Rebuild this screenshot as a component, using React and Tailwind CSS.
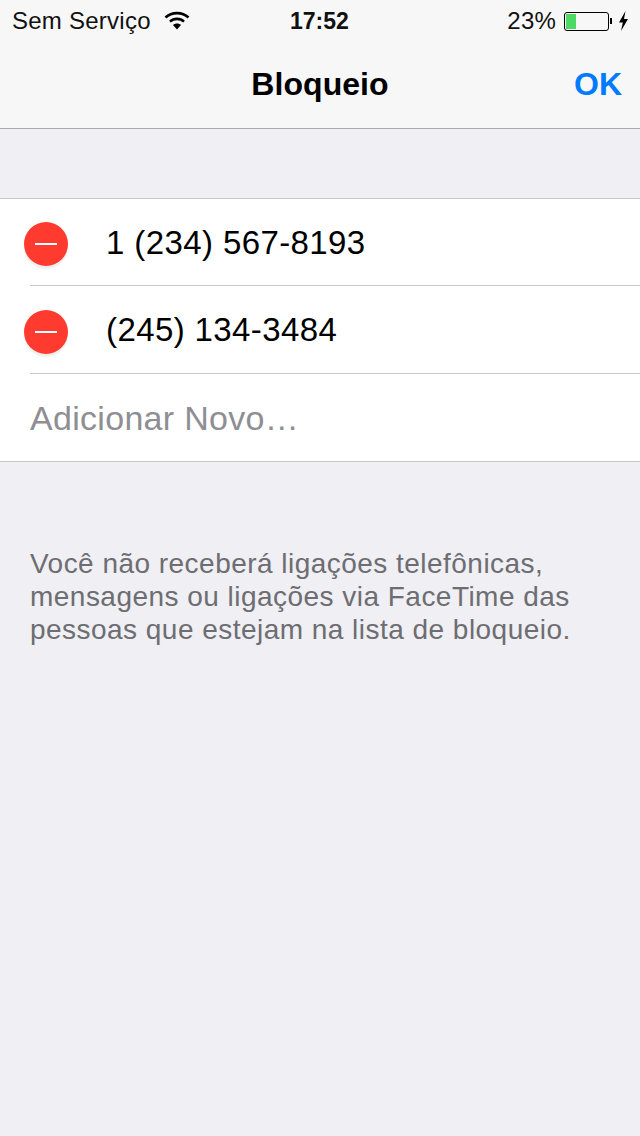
import React from "react";

const numbers = ["1 (234) 567-8193", "(245) 134-3484"];

function Wifi() {
  return (
    <svg width="26" height="20" viewBox="0 0 26 20" className="block">
      <path d="M1.5 7.5C7.8 1.6 18.2 1.6 24.5 7.5" fill="none" stroke="#000" strokeWidth="2.6" />
      <path d="M6 11.6C9.8 8 16.2 8 20 11.6" fill="none" stroke="#000" strokeWidth="2.6" />
      <path d="M13 19.5L9 15C11.2 13 14.8 13 17 15Z" fill="#000" />
    </svg>
  );
}

function Battery() {
  return (
    <div className="flex items-center">
      <div className="w-[45px] h-[19px] rounded-[3px] border border-black p-px">
        <div className="w-[10px] h-full bg-[#4cd964]" />
      </div>
      <div className="w-[2px] h-[6px] bg-black ml-[1px]" />
    </div>
  );
}

function Bolt() {
  return (
    <svg width="11" height="20" viewBox="0 0 11 20" className="block">
      <path d="M7.5 0L1 11.5H4.8L3 20L10 8H6Z" fill="#000" />
    </svg>
  );
}

export default function App() {
  return (
    <div className="w-[640px] h-[1136px] bg-[#efeff4] text-black font-['Liberation_Sans',Arial,sans-serif] overflow-hidden">
      {/* nav bar */}
      <div className="h-[129px] bg-[#f7f7f7] border-b border-[#a9a9ae]">
        <div className="h-[42px] pl-3 pr-[11px] flex items-center justify-between relative">
          <div className="flex items-center gap-[13px]">
            <span className="text-[24px] tracking-[0.25px] text-[#111]">Sem Serviço</span>
            <div className="mb-[3px]">
              <Wifi />
            </div>
          </div>
          <span className="absolute left-[290px] top-[8px] text-[23px] leading-[27px] font-bold text-[#111]">17:52</span>
          <div className="flex items-center gap-[6px]">
            <span className="text-[24px] tracking-[0.2px] text-[#111] mr-[2px]">23%</span>
            <Battery />
            <Bolt />
          </div>
        </div>
        <div className="h-[84px] relative flex items-center justify-center">
          <span className="text-[32px] font-bold tracking-[0.05px]">Bloqueio</span>
          <span className="absolute right-[18px] top-[23px] text-[32px] leading-[38px] font-bold text-[#007aff]">OK</span>
        </div>
      </div>

      {/* blocked list */}
      <div className="mt-[69px] bg-white border-y border-[#c8c7cc]">
        {numbers.map((num) => (
          <div key={num} className="h-[88px] first:h-[87px] pl-[24px] flex items-center relative">
            <div className="w-[44px] h-[44px] rounded-full bg-[#ff3b30] flex items-center justify-center shadow-[0_3px_2px_rgba(0,0,0,0.07)] mt-[3px]">
              <div className="w-[22px] h-[2px] bg-white" />
            </div>
            <span className="ml-[38px] text-[33px] tracking-[0.4px] text-black">{num}</span>
            <div className="absolute left-[30px] right-0 bottom-0 h-px bg-[#c8c7cc]" />
          </div>
        ))}
        <div className="h-[87px] pl-[30px] pt-[2px] flex items-center">
          <span className="text-[34px] tracking-[0.3px] text-[#8e8e93]">Adicionar Novo…</span>
        </div>
      </div>

      {/* footer note */}
      <p className="mt-[85px] pl-[30px] text-[28px] tracking-[0.47px] leading-[33px] text-[#6d6d72] whitespace-nowrap">
        Você não receberá ligações telefônicas,
        <br />
        mensagens ou ligações via FaceTime das
        <br />
        pessoas que estejam na lista de bloqueio.
      </p>
    </div>
  );
}
